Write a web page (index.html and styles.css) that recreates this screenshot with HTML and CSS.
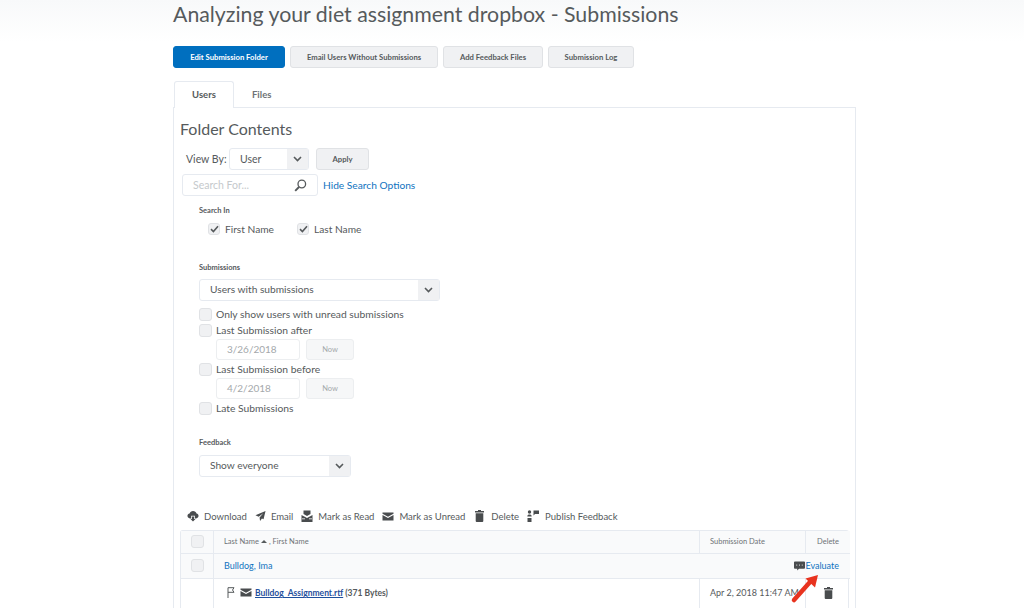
FILE: index.html
```html
<!DOCTYPE html>
<html lang="en">
<head>
<meta charset="utf-8">
<title>Submissions</title>
<link rel="stylesheet" href="styles.css">
</head>
<body>
<main class="page">
  <h1 class="title">Analyzing your diet assignment dropbox - Submissions</h1>
  <div class="actions">
    <button class="btn primary w112">Edit Submission Folder</button>
    <button class="btn w148">Email Users Without Submissions</button>
    <button class="btn w100">Add Feedback Files</button>
    <button class="btn w86">Submission Log</button>
  </div>
  <div class="tabs">
    <div class="tab active">Users</div>
    <div class="tab">Files</div>
  </div>
  <section class="panel">
    <h2 class="heading">Folder Contents</h2>
    <div class="viewby">
      <span class="viewby-label">View By:</span>
      <div class="select s80"><span class="select-text">User</span><span class="select-arrow"><svg width="9" height="6" viewBox="0 0 9 6"><path d="M1 1l3.500 3.500L8 1" fill="none" stroke="#565a5c" stroke-width="1.600"/></svg></span></div>
      <button class="btn apply">Apply</button>
    </div>
    <div class="searchrow">
      <div class="searchbox"><span>Search For...</span>
        <svg width="13" height="13" viewBox="0 0 13 13"><circle cx="7.800" cy="5" r="3.800" fill="none" stroke="#565a5c" stroke-width="1.300"/><path d="M5 8L1.200 11.800" stroke="#565a5c" stroke-width="1.900"/></svg>
      </div>
      <a class="link hide-link">Hide Search Options</a>
    </div>
    <div class="options">
      <div class="label l-search">Search In</div>
      <div class="searchin">
        <label class="check-item w88"><span class="cb"><svg width="9" height="8" viewBox="0 0 9 8"><path d="M1 4.200l2.400 2.300L8 1.200" fill="none" stroke="#565a5c" stroke-width="1.600"/></svg></span>First Name</label>
        <label class="check-item"><span class="cb"><svg width="9" height="8" viewBox="0 0 9 8"><path d="M1 4.200l2.400 2.300L8 1.200" fill="none" stroke="#565a5c" stroke-width="1.600"/></svg></span>Last Name</label>
      </div>
      <div class="label l-subs">Submissions</div>
      <div class="select s241"><span class="select-text">Users with submissions</span><span class="select-arrow"><svg width="9" height="6" viewBox="0 0 9 6"><path d="M1 1l3.500 3.500L8 1" fill="none" stroke="#565a5c" stroke-width="1.600"/></svg></span></div>
      <div class="filters">
        <label class="filter"><span class="cb"></span>Only show users with unread submissions</label>
        <label class="filter"><span class="cb"></span>Last Submission after</label>
        <div class="daterow"><div class="dateinput">3/26/2018</div><button class="btn now">Now</button></div>
        <label class="filter"><span class="cb"></span>Last Submission before</label>
        <div class="daterow"><div class="dateinput">4/2/2018</div><button class="btn now">Now</button></div>
        <label class="filter"><span class="cb"></span>Late Submissions</label>
      </div>
      <div class="label l-feed">Feedback</div>
      <div class="select s152"><span class="select-text">Show everyone</span><span class="select-arrow"><svg width="9" height="6" viewBox="0 0 9 6"><path d="M1 1l3.500 3.500L8 1" fill="none" stroke="#565a5c" stroke-width="1.600"/></svg></span></div>
    </div>
    <div class="toolbar">
      <span class="tool"><svg width="12" height="12" viewBox="0 0 13 12"><path d="M3.200 8.600C1.500 8.400.500 7.200.500 5.800c0-1.400 1-2.400 2.300-2.600C3.300 1.600 4.800.500 6.500.500c1.900 0 3.400 1.200 3.800 2.800 1.300.1 2.200 1.200 2.200 2.500 0 1.400-1 2.600-2.700 2.800H8.500V5.800h-4v2.800z" fill="#494c4e"/><path d="M5.300 6.500h2.400v2.700h1.500L6.500 12 3.800 9.200h1.500z" fill="#494c4e"/></svg>Download</span>
      <span class="tool"><svg width="11" height="12" viewBox="0 0 12 12"><path d="M11.500.500L.500 5.200l3.500 1.500L9 3 5 7.500 5.500 11.500 7.600 8.800 9.300 9.500z" fill="#494c4e"/></svg>Email</span>
      <span class="tool"><svg width="12" height="13" viewBox="0 0 12 13"><path d="M2.500.500h7v3.500l-3.500 2-3.500-2z" fill="#494c4e"/><path d="M.500 5l5.500 3 5.500-3v7H.500z" fill="#494c4e"/><path d="M1 8.800h3M8 8.800h3" stroke="#fff" stroke-width=".800"/></svg>Mark as Read</span>
      <span class="tool"><svg width="12" height="9" viewBox="0 0 12 9"><path d="M.500.500h11v1.300L6 4.800.500 1.800z" fill="#494c4e"/><path d="M.500 3l5.500 3 5.500-3v5.500H.500z" fill="#494c4e"/></svg>Mark as Unread</span>
      <span class="tool tool-delete"><svg width="9" height="12" viewBox="0 0 9 12"><path d="M3 0h3v1h3v1.400H0V1h3z" fill="#494c4e"/><path d="M.700 3.200h7.600V11a1 1 0 0 1-1 1H1.700a1 1 0 0 1-1-1z" fill="#494c4e"/></svg>Delete</span>
      <span class="tool tool-publish"><svg width="12" height="12" viewBox="0 0 12 12"><circle cx="2.500" cy="2" r="1.700" fill="#494c4e"/><path d="M.300 6.500C.300 5 1.300 4.500 2.500 4.500S4.700 5 4.700 6.500z" fill="#494c4e"/><path d="M.500 8h4v4h-4z" fill="#494c4e"/><path d="M6.500.500H12v3.500H8L6.500 5.500z" fill="#494c4e"/></svg>Publish Feedback</span>
    </div>
    <div class="grid">
      <div class="cell head c-check"><span class="cb"></span></div>
      <div class="cell head c-name">Last Name <svg class="sort" width="6" height="3" viewBox="0 0 8 4"><path d="M4 0l4 4H0z" fill="#565a5c"/></svg> , First Name</div>
      <div class="cell head c-date">Submission Date</div>
      <div class="cell head c-del">Delete</div>

      <div class="cell user c-check"><span class="cb"></span></div>
      <div class="cell user user-main"><a class="link">Bulldog, Ima</a>
        <span class="evaluate"><svg width="11" height="10" viewBox="0 0 12 10"><path d="M1 0h10a1 1 0 0 1 1 1v6a1 1 0 0 1-1 1H5.500L3.500 10V8H1a1 1 0 0 1-1-1V1a1 1 0 0 1 1-1z" fill="#494c4e"/><path d="M2.500 4h1M5.500 4h1M8.500 4h1" stroke="#fff"/></svg><a class="link">Evaluate</a></span>
      </div>

      <div class="cell c-blank"></div>
      <div class="cell file">
        <svg width="8" height="11" viewBox="0 0 8 11"><path d="M1 11V.700h6L5.500 3 7 5.300H1" fill="none" stroke="#565a5c"/></svg>
        <svg class="env" width="12" height="9" viewBox="0 0 12 9"><path d="M.500.500h11v1.300L6 4.800.500 1.800z" fill="#494c4e"/><path d="M.500 3l5.500 3 5.500-3v5.500H.500z" fill="#494c4e"/></svg>
        <a class="filelink">Bulldog_Assignment.rtf</a><span class="filesize">(371 Bytes)</span>
      </div>
      <div class="cell filedate">Apr 2, 2018 11:47 AM</div>
      <div class="cell filedel"><svg width="9" height="12" viewBox="0 0 9 12"><path d="M3 0h3v1h3v1.400H0V1h3z" fill="#494c4e"/><path d="M.700 3.200h7.600V11a1 1 0 0 1-1 1H1.700a1 1 0 0 1-1-1z" fill="#494c4e"/></svg></div>
    </div>
  </section>
</main>
<svg class="arrow" width="32" height="32" viewBox="0 0 32 32"><path d="M6 27L22 9" stroke="#e8331f" stroke-width="4.500" stroke-linecap="round"/><path d="M30 2L17.500 5.500 27 14.500z" fill="#e8331f"/></svg>
</body>
</html>
```
FILE: styles.css
```css
* { box-sizing: border-box; }
html, body { margin: 0; height: 608px; overflow: hidden; }
body {
  position: relative;
  background: linear-gradient(#f8f9fa 0, #ffffff 42px);
  font-family: Lato, "Open Sans", sans-serif;
  color: #565a5c;
}
.page { margin-left: 173px; width: 683px; }
.title { margin: 0; height: 46px; font-size: 21.300px; line-height: 29px; font-weight: 400; color: #565a5c; white-space: nowrap; }
.actions { display: flex; gap: 5px; height: 22px; }
.btn {
  height: 22px; padding: 0; border: 1px solid #e0e2e5; border-radius: 3px;
  background: #f0f1f3; color: #565a5c; font: 700 7.700px Lato, sans-serif;
}
.btn.primary { background: #006fbf; border-color: #006fbf; color: #fff; }
.w112 { width: 112px; } .w148 { width: 148px; } .w100 { width: 100px; } .w86 { width: 86px; }
.tabs { display: flex; margin-top: 13px; margin-left: 1px; height: 26px; }
.tab { width: 38px; margin-left: 18px; font-size: 9.500px; font-weight: 700; line-height: 27px; color: #6e7376; }
.tab.active {
  width: 60px; margin: 0; text-align: center; background: #fff; height: 27px; line-height: 25px;
  border: 1px solid #e6eaf0; border-bottom: 0; border-radius: 3px 3px 0 0; color: #565a5c;
}
.panel { height: 501px; padding: 0 6px; border: 1px solid #e6eaf0; border-bottom: 0; background: #fff; }
.heading { margin: 10px 0 0; font-size: 16px; line-height: 22px; font-weight: 400; color: #565a5c; }
.viewby { display: flex; align-items: center; margin: 8px 0 0 6px; height: 22px; font-size: 10.500px; }
.viewby-label { width: 43px; }
.select {
  display: flex; height: 22px; border: 1px solid #e6eaf0; border-radius: 3px;
  background: #fff; font-size: 10.200px; line-height: 19px; color: #565a5c;
}
.s80 { width: 80px; font-size: 10.500px; line-height: 20px; } .s241 { width: 241px; } .s152 { width: 152px; }
.select-text { flex: 1; padding-left: 10px; }
.select-arrow { width: 21px; display: flex; align-items: center; justify-content: center; background: #f0f1f3; }
.apply { width: 53px; margin-left: 7px; }
.searchrow { display: flex; align-items: center; gap: 5px; margin: 4px 0 0 2px; height: 22px; }
.searchbox {
  display: flex; align-items: center; justify-content: space-between; width: 136px; height: 22px;
  padding: 0 10px; border: 1px solid #e6eaf0; border-radius: 3px; font-size: 10.500px; color: #c5c9cc;
}
.link { color: #0f73c0; }
.hide-link { font-size: 10.200px; }
.options { margin-left: 19px; }
.label { font-size: 7.500px; font-weight: 700; line-height: 10px; color: #565a5c; }
.l-search { margin-top: 10px; }
.searchin { display: flex; margin: 7px 0 0 9px; height: 12px; font-size: 10.200px; }
.check-item { display: flex; align-items: center; gap: 5px; line-height: 12px; }
.w88 { width: 89px; }
.cb {
  display: inline-flex; align-items: center; justify-content: center; flex: none;
  width: 13px; height: 13px; border: 1px solid #e0e2e5; border-radius: 3px; background: #f0f1f3;
}
.searchin .cb { width: 12px; height: 12px; }
.l-subs { margin-top: 28px; }
.l-subs + .select { margin-top: 6px; }
.filters { margin-top: 7px; font-size: 10.300px; }
.filter { display: flex; align-items: center; gap: 4px; height: 13px; line-height: 13px; margin-top: 3px; }
.filter:first-child { margin-top: 0; }
.daterow { display: flex; gap: 6px; margin: 2px 0 0 17px; height: 21px; }
.daterow + .filter { margin-top: 3px; }
.dateinput {
  width: 84px; height: 21px; padding-left: 10px; line-height: 19px; border: 1px solid #eceef0; border-radius: 3px;
  font-size: 10px; color: #a4a8ab;
}
.now { width: 48px; height: 21px; font-weight: 400; font-size: 7.500px; color: #a4a8ab; border-color: #eceef0; background: #f6f7f8; }
.l-feed { margin-top: 23px; }
.l-feed + .select { margin-top: 7px; }
.toolbar { display: flex; margin: 32px 0 0 7px; height: 14px; font-size: 9.500px; align-items: center; }
.tool { display: flex; align-items: center; gap: 5px; margin-right: 8px; white-space: nowrap; color: #565a5c; }
.tool-delete { gap: 7px; margin-left: 2px; margin-right: 8px; }
.tool-publish { gap: 6px; }
.grid {
  display: grid; grid-template-columns: 33px 486px 106px 44px; grid-template-rows: 23px 25px 40px;
  width: 669px; margin-top: 7px; border: 1px solid #e6eaf0; border-bottom: 0; border-radius: 3px 3px 0 0;
}
.cell { display: flex; align-items: center; font-size: 7.500px; border-bottom: 1px solid #e6eaf0; }
.head { background: #f9fafb; border-right: 1px solid #e6eaf0; color: #6e7376; padding-bottom: 1px; }
.c-check { justify-content: center; border-right: 1px solid #e6eaf0; }
.c-name, .c-date { padding-left: 10px; }
.c-del { justify-content: center; border-right: 0; }
.sort { margin: 0 2px; }
.user { background: #f9fafb; font-size: 9px; padding-bottom: 1px; }
.user-main { grid-column: 2 / 5; justify-content: space-between; padding: 0 11px 1px 10px; }
.evaluate { display: flex; align-items: center; }
.c-blank { border-right: 1px solid #e6eaf0; border-bottom: 0; }
.file { gap: 4px; padding-left: 13px; align-items: flex-start; padding-top: 8px; font-size: 8.500px; border-right: 1px solid #e6eaf0; border-bottom: 0; }
.env { margin: 1px 0 0 1px; }
.filelink { margin-left: -1px; color: #1f4f9c; font-weight: 700; text-decoration: underline; line-height: 12px; }
.filesize { margin-left: -2px; font-weight: 700; line-height: 12px; color: #565a5c; }
.filedate { padding: 8px 0 0 10px; align-items: flex-start; font-size: 9px; white-space: nowrap; border-right: 1px solid #e6eaf0; border-bottom: 0; }
.filedel { justify-content: center; align-items: flex-start; padding-top: 8px; border-bottom: 0; }
.arrow { position: absolute; left: 788px; top: 573px; }
```
